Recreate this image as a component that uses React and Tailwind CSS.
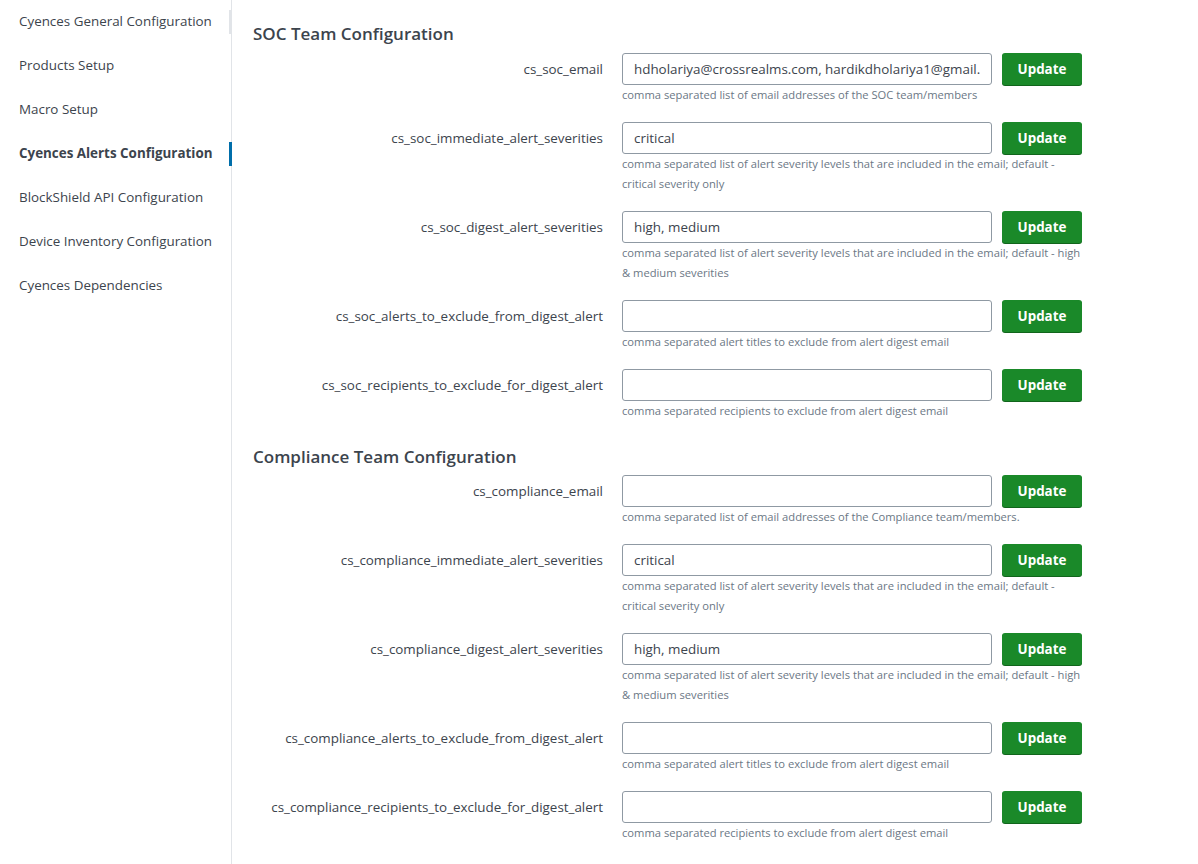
const NAV = [
  "Cyences General Configuration",
  "Products Setup",
  "Macro Setup",
  "Cyences Alerts Configuration",
  "BlockShield API Configuration",
  "Device Inventory Configuration",
  "Cyences Dependencies",
];

const SEVERITY_IMMEDIATE =
  "comma separated list of alert severity levels that are included in the email; default - critical severity only";
const SEVERITY_DIGEST =
  "comma separated list of alert severity levels that are included in the email; default - high & medium severities";

const SECTIONS = [
  {
    title: "SOC Team Configuration",
    fields: [
      { name: "cs_soc_email", value: "hdholariya@crossrealms.com, hardikdholariya1@gmail.com", help: "comma separated list of email addresses of the SOC team/members" },
      { name: "cs_soc_immediate_alert_severities", value: "critical", help: SEVERITY_IMMEDIATE },
      { name: "cs_soc_digest_alert_severities", value: "high, medium", help: SEVERITY_DIGEST },
      { name: "cs_soc_alerts_to_exclude_from_digest_alert", value: "", help: "comma separated alert titles to exclude from alert digest email" },
      { name: "cs_soc_recipients_to_exclude_for_digest_alert", value: "", help: "comma separated recipients to exclude from alert digest email" },
    ],
  },
  {
    title: "Compliance Team Configuration",
    fields: [
      { name: "cs_compliance_email", value: "", help: "comma separated list of email addresses of the Compliance team/members." },
      { name: "cs_compliance_immediate_alert_severities", value: "critical", help: SEVERITY_IMMEDIATE },
      { name: "cs_compliance_digest_alert_severities", value: "high, medium", help: SEVERITY_DIGEST },
      { name: "cs_compliance_alerts_to_exclude_from_digest_alert", value: "", help: "comma separated alert titles to exclude from alert digest email" },
      { name: "cs_compliance_recipients_to_exclude_for_digest_alert", value: "", help: "comma separated recipients to exclude from alert digest email" },
    ],
  },
];

function Field({ field }) {
  return (
    <div className="flex mb-[17px]">
      <label className="w-[350px] shrink-0 h-8 flex items-center justify-end text-[13.4px] text-[#3c444d]">
        {field.name}
      </label>
      <div className="ml-[19px] w-[466px]">
        <div className="flex gap-[10px]">
          <input
            readOnly
            defaultValue={field.value}
            className="w-[370px] h-8 px-[11px] rounded-[3px] border border-[#8f99a3] bg-white text-[13.4px] text-[#3c444d] outline-none"
          />
          <button className="w-20 h-8 rounded-[3px] bg-[#1a8929] text-white text-[13.4px] font-bold shadow-[0_1px_0_#11651c]">
            Update
          </button>
        </div>
        <p className="text-[11.2px] leading-5 text-[#6b7785]">{field.help}</p>
      </div>
    </div>
  );
}

export default function App() {
  return (
    <div className="flex min-h-[864px] bg-white font-['Open_Sans','Lato',sans-serif] text-[#3c444d]">
      <nav className="w-[232px] shrink-0 border-r border-[#e1e4e8]">
        {NAV.map((item, i) => (
          <div
            key={item}
            className={`relative h-11 flex items-center pl-[19px] pb-[2px] text-[13.4px] ${i === 3 ? "font-bold text-[#3c444d]" : "text-[#3c444d]"}`}
          >
            {item}
            {i === 0 && <span className="absolute right-[-1px] top-[10px] w-[3px] h-6 bg-[#e1e4e8]" />}
            {i === 3 && <span className="absolute right-[-1px] top-[10px] w-[3px] h-6 bg-[#006eaa]" />}
          </div>
        ))}
      </nav>

      <main className="flex-1 pl-[21px] pt-[22px]">
        {SECTIONS.map((section, i) => (
          <section key={section.title} className={i > 0 ? "mt-[24px]" : ""}>
            <h2 className={`text-[17px] leading-6 font-semibold text-[#3c444d] ${i > 0 ? "mb-[6px]" : "mb-[7px]"}`}>{section.title}</h2>
            {section.fields.map((f) => (
              <Field key={f.name} field={f} />
            ))}
          </section>
        ))}
      </main>
    </div>
  );
}
